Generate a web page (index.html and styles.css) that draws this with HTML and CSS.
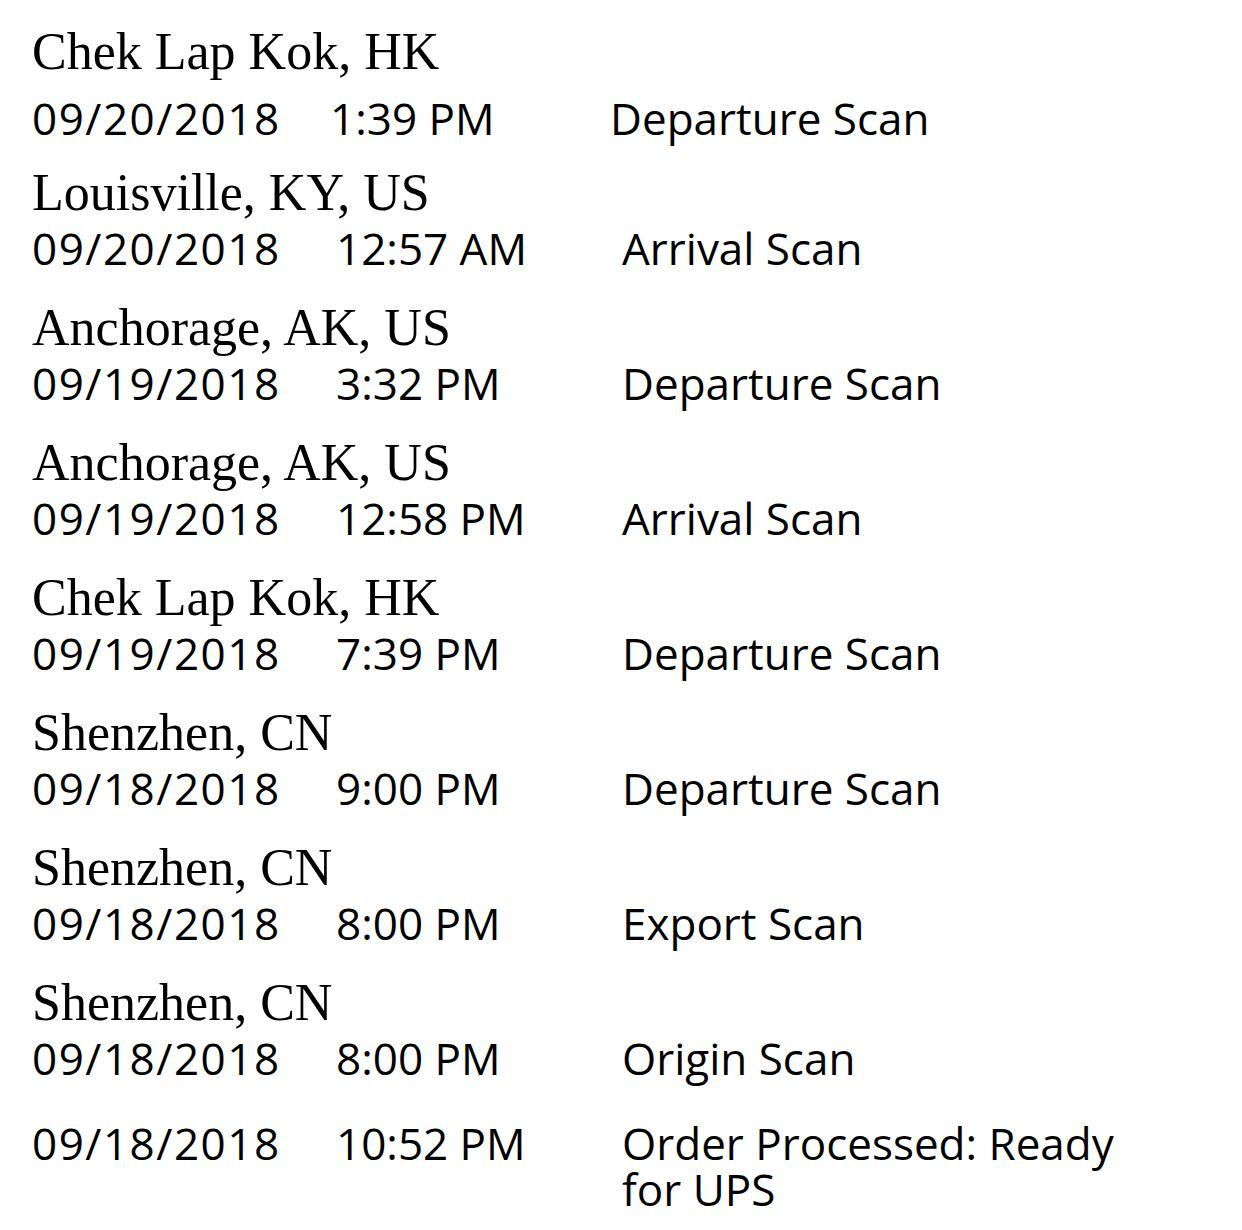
FILE: index.html
```html
<!DOCTYPE html>
<html>
<head>
<meta charset="utf-8">
<link rel="stylesheet" href="styles.css">
</head>
<body>
<div class="list">
  <div class="entry first">
    <div class="loc">Chek Lap Kok, HK</div>
    <div class="line"><span class="date">09/20/2018</span><span class="time">1:39 PM</span><span class="desc">Departure Scan</span></div>
  </div>
  <div class="entry">
    <div class="loc">Louisville, KY, US</div>
    <div class="line"><span class="date">09/20/2018</span><span class="time">12:57 AM</span><span class="desc">Arrival Scan</span></div>
  </div>
  <div class="entry">
    <div class="loc">Anchorage, AK, US</div>
    <div class="line"><span class="date">09/19/2018</span><span class="time">3:32 PM</span><span class="desc">Departure Scan</span></div>
  </div>
  <div class="entry">
    <div class="loc">Anchorage, AK, US</div>
    <div class="line"><span class="date">09/19/2018</span><span class="time">12:58 PM</span><span class="desc">Arrival Scan</span></div>
  </div>
  <div class="entry">
    <div class="loc">Chek Lap Kok, HK</div>
    <div class="line"><span class="date">09/19/2018</span><span class="time">7:39 PM</span><span class="desc">Departure Scan</span></div>
  </div>
  <div class="entry">
    <div class="loc">Shenzhen, CN</div>
    <div class="line"><span class="date">09/18/2018</span><span class="time">9:00 PM</span><span class="desc">Departure Scan</span></div>
  </div>
  <div class="entry">
    <div class="loc">Shenzhen, CN</div>
    <div class="line"><span class="date">09/18/2018</span><span class="time">8:00 PM</span><span class="desc">Export Scan</span></div>
  </div>
  <div class="entry">
    <div class="loc">Shenzhen, CN</div>
    <div class="line"><span class="date">09/18/2018</span><span class="time">8:00 PM</span><span class="desc">Origin Scan</span></div>
  </div>
  <div class="entry noloc">
    <div class="line"><span class="date">09/18/2018</span><span class="time">10:52 PM</span><span class="desc">Order Processed: Ready for UPS</span></div>
  </div>
</div>
</body>
</html>
```
FILE: styles.css
```css
html, body {
  margin: 0;
  padding: 0;
  background: #ffffff;
  color: #000000;
}
.list {
  padding: 22px 0 0 32px;
  display: flex;
  flex-direction: column;
}
.entry {
  height: 135px;
  display: flex;
  flex-direction: column;
}
.entry.first {
  height: 141px;
}
.loc {
  font-family: "Liberation Serif", serif;
  font-size: 52px;
  line-height: 60px;
  height: 60px;
}
.first .loc {
  height: 71px;
}
.line {
  display: flex;
  font-family: "Open Sans", sans-serif;
  font-size: 44px;
  line-height: 50px;
}
.date {
  width: 304px;
  flex: none;
  letter-spacing: 1.5px;
}
.time {
  width: 286px;
  flex: none;
}
.first .date {
  width: 298px;
}
.first .time {
  width: 280px;
}
.desc {
  width: 500px;
}
.noloc {
  padding-top: 12px;
}
.noloc .line {
  line-height: 46px;
}
```
